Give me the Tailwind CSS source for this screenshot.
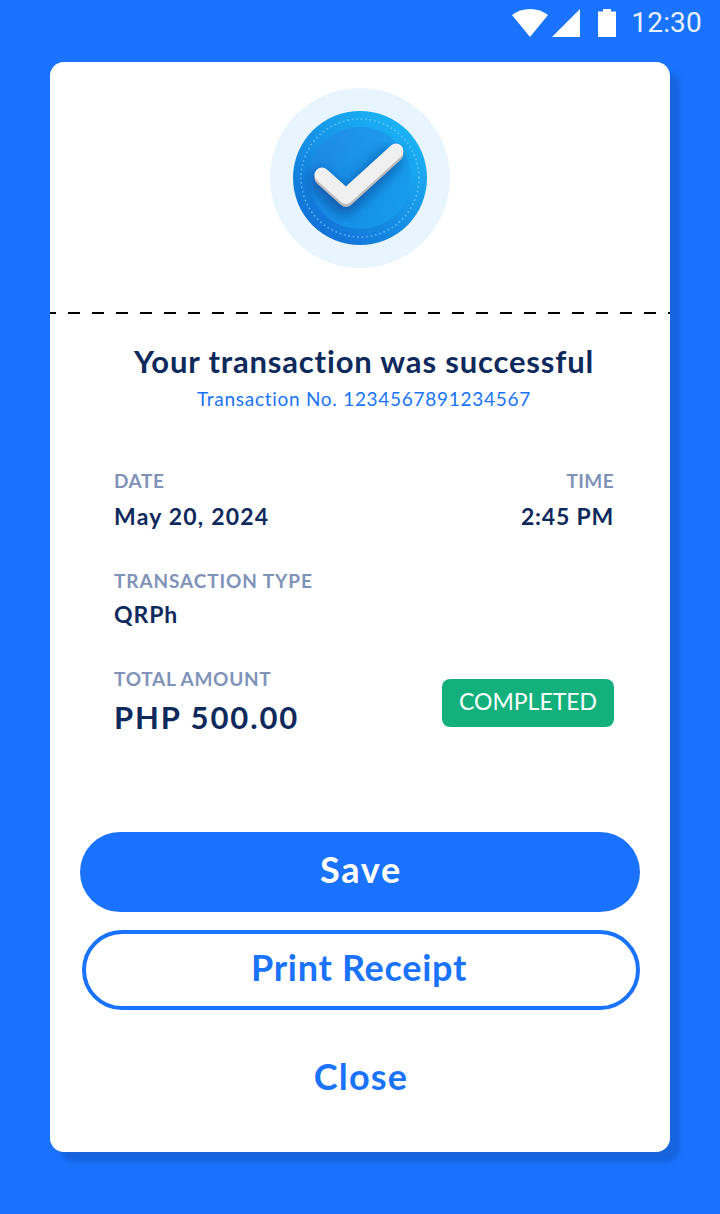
<!DOCTYPE html>
<html>
<head>
    <meta charset="utf-8">
    <script src="https://cdn.jsdelivr.net/npm/@tailwindcss/browser@4"></script>
    <title>Transaction receipt</title>
</head>
<body class="bg-[#1a73ff] font-['Lato',sans-serif]">

<div class="w-[720px] h-[1214px] flex flex-col overflow-hidden">
    <div class="h-[50px] flex items-center justify-end pr-[18px] pb-[4px] shrink-0">
        <svg class="mr-[4px]" width="36" height="28" viewBox="0 0 36 28">
            <path d="M0 6C5 2.300 11 0 18 0s13 2.300 18 6L18 28z" fill="#fff"/>
        </svg>
        <svg class="mr-[18px]" width="28" height="28" viewBox="0 0 28 28">
            <path d="M0 28L28 0v28z" fill="#fff"/>
        </svg>
        <svg class="mr-[15px]" width="18" height="28" viewBox="0 0 18 28">
            <path d="M0 2.500h5V0h8v2.500h5V28H0z" fill="#fff"/>
        </svg>
        <span class="font-['Roboto',sans-serif] text-[28px] leading-none tracking-[0.2px] text-[#e8f1ff]">12:30</span>
    </div>

    <div class="mt-[12px] ml-[50px] w-[620px] h-[1090px] bg-white rounded-[14px] shadow-[10px_10px_5px_rgba(20,85,190,0.5)] flex flex-col">
        <div class="h-[250px] flex items-start justify-center pt-[26px]">
            <svg width="180" height="180" viewBox="0 0 180 180">
                <defs>
                    <linearGradient id="outerDisc" x1="0.85" y1="0.1" x2="0.2" y2="0.9">
                        <stop offset="0" stop-color="#1bb4f6"/>
                        <stop offset="1" stop-color="#1273d8"/>
                    </linearGradient>
                    <linearGradient id="innerDisc" x1="0.2" y1="0.1" x2="0.85" y2="0.9">
                        <stop offset="0" stop-color="#2288e6"/>
                        <stop offset="1" stop-color="#14a0f0"/>
                    </linearGradient>
                    <filter id="checkShadow" x="-40%" y="-40%" width="180%" height="180%">
                        <feGaussianBlur stdDeviation="7"/>
                    </filter>
                </defs>
                <circle cx="90" cy="90" r="90" fill="#e8f5fe"/>
                <circle cx="90" cy="90" r="67" fill="url(#outerDisc)"/>
                <circle cx="90" cy="90" r="51" fill="url(#innerDisc)" opacity="0.65"/>
                <circle cx="90" cy="90" r="59" fill="none" stroke="#8ad6fb" stroke-width="1.800" stroke-linecap="round" stroke-dasharray="0.100 4.400" opacity="0.6"/>
                <path d="M50 92L74 116L120 72" fill="none" stroke="#0a4a96" stroke-width="20" stroke-linecap="round" stroke-linejoin="round" opacity="0.8" filter="url(#checkShadow)"/>
                <path d="M52 90L76 111.500L126 66" fill="none" stroke="#bdbdbd" stroke-width="15" stroke-linecap="round" stroke-linejoin="round"/>
                <path d="M52 87L76 108.500L126 63" fill="none" stroke="#f0f0f0" stroke-width="15" stroke-linecap="round" stroke-linejoin="round"/>
            </svg>
        </div>

        <div class="h-[2px] bg-[repeating-linear-gradient(90deg,#000_0,#000_6px,transparent_6px,transparent_18px,#000_18px,#000_24px)]"></div>

        <div class="flex flex-col items-center mt-[29px] pl-[8px]">
            <h1 class="text-[31px] leading-[36px] font-bold text-[#0e2a5c] tracking-[0.83px]">Your transaction was successful</h1>
            <p class="mt-[8px] text-[19px] leading-[24px] text-[#1a73ff] tracking-[0.72px]">Transaction No. 1234567891234567</p>
        </div>

        <div class="mt-[58px] pl-[64px] pr-[56px]">
            <div class="flex justify-between">
                <div>
                    <p class="text-[19px] leading-[24px] font-bold text-[#7f93b8] tracking-[0.6px]">DATE</p>
                    <p class="mt-[11px] text-[23px] leading-[24px] font-bold text-[#0e2a5c] tracking-[1.2px]">May 20, 2024</p>
                </div>
                <div class="text-right">
                    <p class="text-[19px] leading-[24px] font-bold text-[#7f93b8] tracking-[0.4px]">TIME</p>
                    <p class="mt-[11px] text-[23px] leading-[24px] font-bold text-[#0e2a5c] tracking-[0.8px]">2:45 PM</p>
                </div>
            </div>

            <div class="mt-[41px]">
                <p class="text-[19px] leading-[24px] font-bold text-[#7f93b8] tracking-[0.9px]">TRANSACTION TYPE</p>
                <p class="mt-[9px] text-[23px] leading-[24px] font-bold text-[#0e2a5c] tracking-[0.9px]">QRPh</p>
            </div>

            <div class="mt-[41px] flex justify-between items-start">
                <div>
                    <p class="text-[19px] leading-[24px] font-bold text-[#7f93b8] tracking-[0.7px]">TOTAL AMOUNT</p>
                    <p class="mt-[8px] text-[31px] leading-[36px] font-bold text-[#0e2a5c] tracking-[1.9px]">PHP 500.00</p>
                </div>
                <span class="mt-[12px] w-[172px] h-[48px] rounded-[8px] bg-[#14b07c] text-white text-[23px] flex items-center justify-center pb-[3px]">COMPLETED</span>
            </div>
        </div>

        <div class="mt-[97px] px-[30px] flex flex-col">
            <button class="w-[560px] h-[80px] rounded-full bg-[#1a73ff] text-white text-[36px] font-bold tracking-[1.7px] pb-[6px] pl-[2px]">Save</button>
            <button class="mt-[18px] self-end w-[558px] h-[80px] rounded-full bg-white border-[4px] border-[#1a73ff] text-[#1a73ff] text-[36px] font-bold tracking-[0.7px] pb-[6px] pr-[4px]">Print Receipt</button>
            <button class="mt-[27px] h-[80px] text-[#1a73ff] text-[36px] font-bold tracking-[1.2px] pb-[2px] pl-[2px]">Close</button>
        </div>
    </div>
</div>

</body>
</html>
